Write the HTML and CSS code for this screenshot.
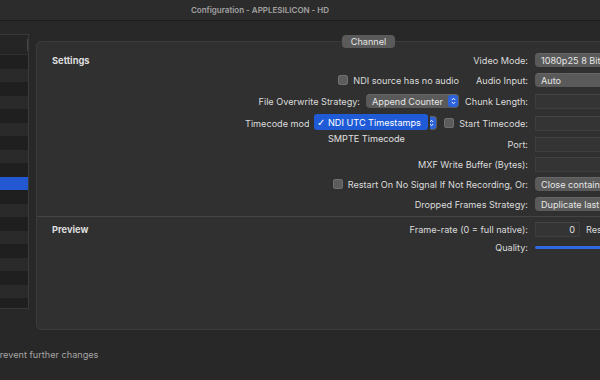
FILE: index.html
```html
<!DOCTYPE html>
<html>
<head>
  <title>Configuration - APPLESILICON - HD</title>
  <link rel="stylesheet" href="styles.css">
</head>
<body>
  <header class="titlebar"><span>Configuration - APPLESILICON - HD</span></header>

  <div class="main">
    <div class="sidebar">
      <div class="table-head"><span class="head-divider"></span></div>
      <ul class="rows">
        <li></li><li></li><li></li><li></li><li></li>
        <li></li><li></li><li></li><li></li><li class="selected"></li>
        <li></li><li></li><li></li><li></li><li></li>
        <li></li><li></li><li></li><li></li><li></li>
      </ul>
    </div>

    <div class="panel">
      <div class="tab">Channel</div>

      <section class="section settings">
        <h2 class="heading">Settings</h2>
        <div class="label">Video Mode:</div>
        <div class="control"><div class="popup">1080p25 8 Bit</div></div>

        <div class="left"><span class="check"></span>NDI source has no audio</div>
        <div class="label">Audio Input:</div>
        <div class="control"><div class="popup">Auto</div></div>

        <div class="left">File Overwrite Strategy:<div class="popup popup-small">Append Counter<span class="stepper"><svg width="5" height="8" viewBox="0 0 5 8"><path d="M0.8 3 L2.5 1.3 L4.2 3 M0.8 5 L2.5 6.7 L4.2 5" fill="none" stroke="#fff" stroke-width="1"/></svg></span></div></div>
        <div class="label">Chunk Length:</div>
        <div class="control"><div class="field"></div></div>

        <div class="left timecode"><span class="timecode-label">Timecode mode:</span><div class="popup popup-timecode"><span class="stepper"><svg width="5" height="8" viewBox="0 0 5 8"><path d="M0.8 3 L2.5 1.3 L4.2 3 M0.8 5 L2.5 6.7 L4.2 5" fill="none" stroke="#fff" stroke-width="1"/></svg></span></div>
          <div class="menu">
            <div class="menu-item active"><span class="tick">✓</span>NDI UTC Timestamps</div>
            <div class="menu-item">SMPTE Timecode</div>
          </div>
        </div>
        <div class="label"><span class="check"></span>Start Timecode:</div>
        <div class="control"><div class="field"></div></div>

        <div class="left"></div>
        <div class="label">Port:</div>
        <div class="control"><div class="field"></div></div>

        <div class="left"></div>
        <div class="label">MXF Write Buffer (Bytes):</div>
        <div class="control"><div class="field"></div></div>

        <div class="left"></div>
        <div class="label"><span class="check"></span>Restart On No Signal If Not Recording, Or:</div>
        <div class="control"><div class="popup">Close container</div></div>

        <div class="left"></div>
        <div class="label">Dropped Frames Strategy:</div>
        <div class="control"><div class="popup">Duplicate last frame</div></div>
      </section>

      <section class="section preview">
        <h2 class="heading">Preview</h2>
        <div class="label">Frame-rate (0 = full native):</div>
        <div class="control"><div class="field field-number">0</div><span class="after">Resolution</span></div>

        <div class="left"></div>
        <div class="label">Quality:</div>
        <div class="control"><div class="slider"></div></div>
      </section>
    </div>
  </div>

  <p class="footnote">Prevent further changes</p>
</body>
</html>
```

FILE: styles.css
```css
body {
  margin: 0;
  width: 600px;
  height: 380px;
  overflow: hidden;
  background-color: #282828;
  font-family: Inter, "Liberation Sans", sans-serif;
  font-size: 9.15px;
  color: #dcdcdc;
}

.titlebar {
  height: 20px;
  padding-right: 80px;
  background-color: #2c2c2c;
  border-bottom: 1px solid #1c1c1c;
  display: flex;
  align-items: center;
  justify-content: center;
  font-size: 8px;
  font-weight: 600;
  color: #a2a2a2;
}

.main {
  display: flex;
  align-items: flex-start;
  padding-top: 13px;
}

/* Tabelle links */
.sidebar {
  flex: none;
  width: 28px;
  height: 273px;
  overflow: hidden;
  border-top: 1px solid #383838;
  border-right: 1px solid #3a3a3a;
  border-bottom: 1px solid #383838;
}

.table-head {
  height: 19px;
  background-color: #252525;
  border-bottom: 1px solid #2f2f2f;
  display: flex;
  justify-content: flex-end;
  align-items: center;
}

.head-divider {
  width: 1px;
  height: 12px;
  background-color: #444;
}

.rows {
  list-style: none;
  margin: 0;
  padding: 0;
}

.rows li {
  height: 13.5px;
  background-color: #2a2a2a;
}

.rows li:nth-child(odd) {
  background-color: #1f1f1f;
}

.rows li.selected {
  background-color: #2358d2;
}

/* Gruppenbox */
.panel {
  flex: none;
  position: relative;
  margin-left: 7px;
  margin-top: 7px;
  width: 700px;
  height: 287px;
  background-color: #303030;
  border: 1px solid #3c3c3c;
  border-radius: 5px;
}

.tab {
  position: absolute;
  left: 305px;
  top: -7px;
  width: 53px;
  height: 13px;
  background-color: #5a5a5a;
  border-radius: 4px;
  color: #e4e4e4;
  display: flex;
  align-items: center;
  justify-content: center;
}

.section {
  display: grid;
  grid-template-columns: 407px 62px 200px;
  column-gap: 7px;
  padding-left: 15px;
}

.settings {
  grid-template-rows: 20px 21px 22px 21px 20px 20px 20px 14px;
  padding-top: 11px;
  padding-bottom: 5px;
  border-bottom: 1px solid #454545;
}

.preview {
  grid-template-rows: 18px 14px;
  padding-top: 5px;
}

.heading {
  margin: 0;
  height: 14px;
  display: flex;
  align-items: center;
  font-size: 9.3px;
  font-weight: 700;
  color: #dedede;
}

.left,
.label {
  height: 14px;
  display: flex;
  align-items: center;
  justify-content: flex-end;
  white-space: nowrap;
}

.control {
  height: 14px;
  display: flex;
  align-items: center;
  white-space: nowrap;
}

.popup {
  position: relative;
  flex: 1;
  height: 14px;
  padding-left: 6px;
  background-color: #5a5a5a;
  border-radius: 4px;
  color: #e6e6e6;
  display: flex;
  align-items: center;
  box-shadow: inset 0 1px 0 rgba(255, 255, 255, 0.08);
}

.popup-small {
  flex: none;
  width: 87px;
  margin-left: 6px;
}

.timecode {
  position: relative;
  padding-right: 22px;
}

/* Beschriftung wird vom offenen Menü verdeckt */
.timecode-label {
  flex: none;
  width: 64px;
  overflow: hidden;
  margin-right: 3px;
}

.popup-timecode {
  flex: none;
  width: 119px;
}

.stepper {
  position: absolute;
  right: 1px;
  top: 1px;
  width: 10px;
  height: 12px;
  background-color: #2c63da;
  border-radius: 3px;
  display: flex;
  align-items: center;
  justify-content: center;
}

.field {
  flex: 1;
  height: 13px;
  background-color: #343434;
  border: 1px solid #3e3e3e;
  border-top-color: #444;
}

.field-number {
  flex: none;
  width: 39px;
  padding-right: 4px;
  display: flex;
  align-items: center;
  justify-content: flex-end;
  color: #e0e0e0;
}

.after {
  margin-left: 6px;
}

.check {
  flex: none;
  width: 8px;
  height: 8px;
  margin-right: 5px;
  background-color: #5c5c5c;
  border: 0.5px solid #707070;
  border-radius: 2px;
}

.slider {
  flex: 1;
  height: 3px;
  background-color: #2e6be0;
  border-radius: 2px;
}

/* aufgeklapptes Menü */
.menu {
  position: absolute;
  left: 259px;
  top: -5px;
  width: 114px;
  padding: 3px 2px 3px 3px;
  background-color: #303030;
  text-align: left;
}

.menu-item {
  height: 16px;
  padding-left: 14px;
  display: flex;
  align-items: center;
  position: relative;
  color: #e0e0e0;
}

.menu-item.active {
  background-color: #1f5bd6;
  border-radius: 3px;
  color: #fff;
}

.tick {
  position: absolute;
  left: 3px;
  font-family: "DejaVu Sans", sans-serif;
  font-size: 10px;
}

.footnote {
  margin: 19px 0 0 -6px;
  line-height: 12px;
  color: #a6a6a6;
}
```
